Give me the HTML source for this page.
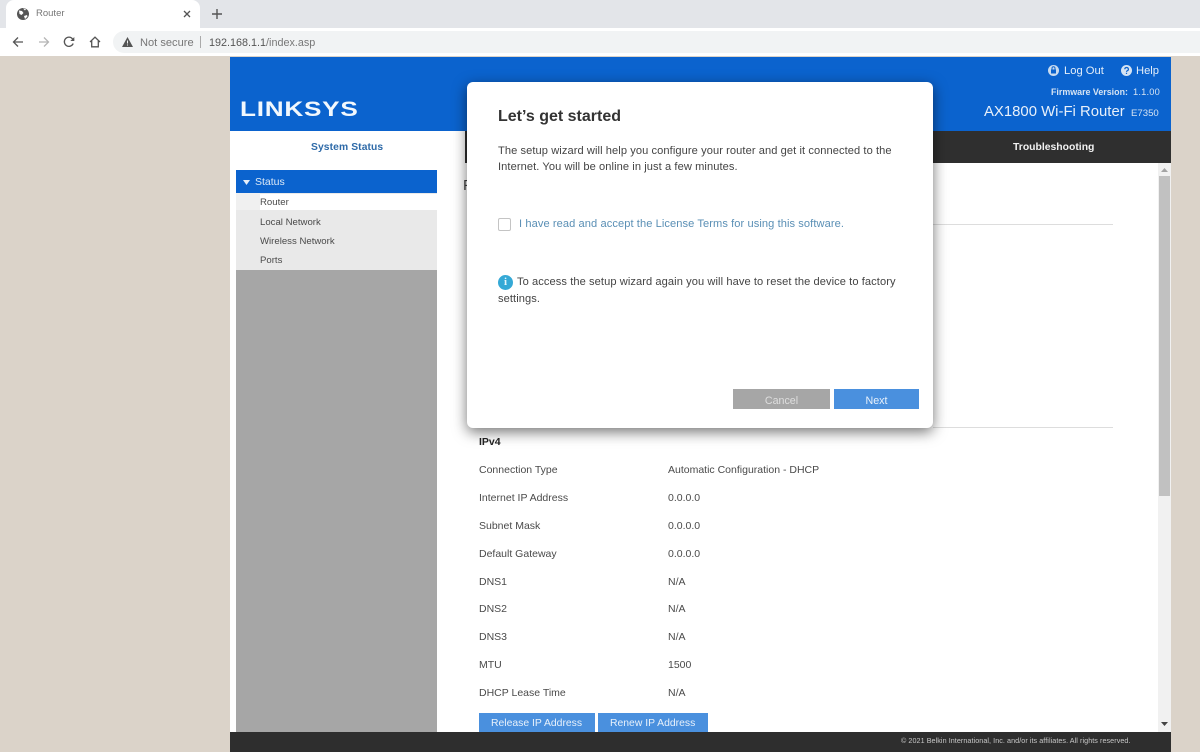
<!DOCTYPE html>
<html><head><meta charset="utf-8"><title>Router</title>
<style>
html,body{margin:0;padding:0;width:1200px;height:752px;overflow:hidden;background:#dbd3c9;font-family:"Liberation Sans",sans-serif}
#w{position:absolute;left:0;top:0;width:1200px;height:752px;overflow:hidden;filter:blur(.3px)}
.a{position:absolute}
.t{position:absolute;white-space:nowrap;line-height:14px}
.l{font-size:10.5px;color:#4a4a4a}
.c{font-size:10.5px;color:#4a4a4a}
.s{font-size:9.6px;color:#4a4a4a}
.m{font-size:11.1px;color:#444;letter-spacing:.08px}
svg{position:absolute;overflow:visible}
</style></head><body><div id="w">
<!-- chrome -->
<div class="a" style="left:0;top:0;width:1200px;height:28px;background:#e3e5e9"></div>
<div class="a" style="left:6px;top:0;width:194px;height:28px;background:#fff;border-radius:8px 8px 0 0"></div>
<div class="a" style="left:0;top:28px;width:1200px;height:29px;background:#fff"></div>
<svg style="left:16px;top:7px" width="14" height="14" viewBox="0 0 14 14"><circle cx="7" cy="7" r="6" fill="#555"/><path d="M3 3.5l3 .5 1.5 2-2 2-2-1zM8 9l3-1 .5 1.5-2.500 2.500zM7 1.500l3 .5-1 1.500z" fill="#fff"/></svg>
<div class="t" style="left:36px;top:7px;font-size:9.500px;line-height:14px;color:#777">Router</div>
<svg style="left:182px;top:9px" width="10" height="10" viewBox="0 0 10 10"><path d="M2 2l6 6M8 2l-6 6" stroke="#555" stroke-width="1.300" fill="none"/></svg>
<svg style="left:211px;top:8px" width="12" height="12" viewBox="0 0 12 12"><path d="M6 1v10M1 6h10" stroke="#555" stroke-width="1.400" fill="none"/></svg>
<svg style="left:12px;top:36px" width="12" height="12" viewBox="0 0 12 12"><path d="M11 6H1.500M6 1.500L1.500 6 6 10.500" stroke="#555" stroke-width="1.300" fill="none"/></svg>
<svg style="left:38px;top:36px" width="12" height="12" viewBox="0 0 12 12"><path d="M1 6h9.500M6 1.500L10.500 6 6 10.500" stroke="#b5b5b5" stroke-width="1.300" fill="none"/></svg>
<svg style="left:63px;top:36px" width="12" height="12" viewBox="0 0 12 12"><path d="M10.200 7.500A4.600 4.600 0 1 1 9.500 2.800L11 4.300" stroke="#555" stroke-width="1.300" fill="none"/><path d="M11.300 1v4h-4z" fill="#555"/></svg>
<svg style="left:89px;top:36px" width="12" height="12" viewBox="0 0 12 12"><path d="M1 6l5-4.800L11 6M2.700 5v5.800h6.600V5" stroke="#555" stroke-width="1.300" fill="none"/></svg>
<div class="a" style="left:113px;top:31px;width:1087px;height:22px;background:#f1f3f4;border-radius:11px 0 0 11px"></div>
<svg style="left:122px;top:37px" width="11" height="10" viewBox="0 0 11 10"><path d="M5.500 0L11 10H0z" fill="#555"/><path d="M5.500 3.500v3M5.500 7.500v1" stroke="#f1f3f4" stroke-width="1"/></svg>
<div class="t" style="left:140px;top:36px;font-size:11.100px;color:#777">Not secure</div>
<div class="a" style="left:200px;top:36px;width:1px;height:12px;background:#aaa"></div>
<div class="t" style="left:209px;top:36px;font-size:10.800px;color:#777"><span style="color:#555">192.168.1.1</span>/index.asp</div>

<!-- page -->
<div class="a" style="left:0;top:56px;width:1200px;height:696px;background:#dbd3c9"></div>
<div class="a" style="left:230px;top:57px;width:941px;height:695px;background:#fff"></div>
<div class="a" style="left:230px;top:57px;width:941px;height:74px;background:#0b63ce"></div>
<div class="t" style="left:240px;top:94px;font-size:21px;line-height:32px;font-weight:bold;color:#f2f8fd;letter-spacing:.6px;transform:scaleX(1.245);transform-origin:0 0">LINKSYS</div>
<svg style="left:1048px;top:65px" width="11" height="11" viewBox="0 0 11 11"><circle cx="5.500" cy="5.500" r="5.500" fill="#c9dbef"/><rect x="3" y="4.500" width="5" height="4" fill="#0b63ce"/><path d="M4 4.500V3.200a1.500 1.500 0 0 1 3 0v1.300" stroke="#0b63ce" fill="none"/></svg>
<div class="t" style="left:1064px;top:64px;font-size:11.200px;color:#e4eef9">Log Out</div>
<svg style="left:1121px;top:65px" width="11" height="11" viewBox="0 0 11 11"><circle cx="5.500" cy="5.500" r="5.500" fill="#d5e3f3"/><path d="M3.800 4.200a1.800 1.700 0 1 1 2.600 1.500c-.6.300-.9.600-.9 1.200M5.500 7.800v1.200" stroke="#0b63ce" stroke-width="1.200" fill="none"/></svg>
<div class="t" style="left:1136px;top:64px;font-size:11.200px;color:#e4eef9">Help</div>
<div class="t" style="left:1051px;top:85px;font-size:8.900px;font-weight:bold;color:#d5e3f3">Firmware Version:</div>
<div class="t" style="left:1133px;top:85px;font-size:9.300px;color:#d5e3f3;letter-spacing:.2px">1.1.00</div>
<div class="t" style="left:984px;top:105px;font-size:14.900px;color:#e8f0fa">AX1800 Wi-Fi Router</div>
<div class="t" style="left:1131px;top:107px;font-size:9.600px;color:#d5e3f3">E7350</div>

<div class="a" style="left:465px;top:131px;width:706px;height:32px;background:#2f2f2f"></div>
<div class="t" style="left:1013px;top:141px;font-size:10.400px;font-weight:bold;color:#f2f2f2">Troubleshooting</div>
<div class="t" style="left:311px;top:141px;font-size:10.300px;font-weight:bold;color:#2e6aa8;letter-spacing:.1px">System Status</div>

<div class="a" style="left:236px;top:170px;width:201px;height:23px;background:#0b63ce"></div>
<svg style="left:243px;top:180px" width="7" height="5" viewBox="0 0 7 5"><path d="M0 0h7L3.500 5z" fill="#e6eff9"/></svg>
<div class="t" style="left:255px;top:175px;font-size:10.500px;color:#dce9f7">Status</div>
<div class="a" style="left:236px;top:193px;width:201px;height:77px;background:#e9e9e9"></div>
<div class="a" style="left:260px;top:194px;width:177px;height:16px;background:#fff"></div>
<div class="a" style="left:236px;top:193px;width:24px;height:17px;background:#f0f0f0"></div>
<div class="t s" style="left:260px;top:196px">Router</div>
<div class="t s" style="left:260px;top:216px">Local Network</div>
<div class="t s" style="left:260px;top:235px">Wireless Network</div>
<div class="t s" style="left:260px;top:254px">Ports</div>
<div class="a" style="left:236px;top:270px;width:201px;height:462px;background:#a6a6a6"></div>

<div class="t" style="left:463px;top:179px;font-size:15px;color:#444">F</div>
<div class="a" style="left:933px;top:224px;width:180px;height:1px;background:#ddd"></div>
<div class="a" style="left:933px;top:427px;width:180px;height:1px;background:#ddd"></div>

<div class="t" style="left:479px;top:435px;font-size:10.500px;font-weight:bold;color:#222">IPv4</div>
<div class="t l" style="left:479px;top:463px">Connection Type</div><div class="t c" style="left:668px;top:463px">Automatic Configuration - DHCP</div>
<div class="t l" style="left:479px;top:491px">Internet IP Address</div><div class="t c" style="left:668px;top:491px">0.0.0.0</div>
<div class="t l" style="left:479px;top:519px">Subnet Mask</div><div class="t c" style="left:668px;top:519px">0.0.0.0</div>
<div class="t l" style="left:479px;top:547px">Default Gateway</div><div class="t c" style="left:668px;top:547px">0.0.0.0</div>
<div class="t l" style="left:479px;top:575px">DNS1</div><div class="t c" style="left:668px;top:575px">N/A</div>
<div class="t l" style="left:479px;top:602px">DNS2</div><div class="t c" style="left:668px;top:602px">N/A</div>
<div class="t l" style="left:479px;top:630px">DNS3</div><div class="t c" style="left:668px;top:630px">N/A</div>
<div class="t l" style="left:479px;top:658px">MTU</div><div class="t c" style="left:668px;top:658px">1500</div>
<div class="t l" style="left:479px;top:686px">DHCP Lease Time</div><div class="t c" style="left:668px;top:686px">N/A</div>
<div class="a" style="left:479px;top:713px;width:116px;height:19px;background:#4a90de"></div>
<div class="t" style="left:491px;top:716.500px;font-size:10.400px;color:#e8f1fb">Release IP Address</div>
<div class="a" style="left:598px;top:713px;width:110px;height:19px;background:#4a90de"></div>
<div class="t" style="left:610px;top:716.500px;font-size:10.400px;color:#e8f1fb">Renew IP Address</div>

<!-- scrollbar -->
<div class="a" style="left:1158px;top:163px;width:13px;height:569px;background:#f1f1f1"></div>
<div class="a" style="left:1159px;top:176px;width:11px;height:320px;background:#c1c1c1"></div>
<svg style="left:1161px;top:168px" width="7" height="4" viewBox="0 0 7 4"><path d="M0 4h7L3.500 0z" fill="#a3a3a3"/></svg>
<svg style="left:1161px;top:722px" width="7" height="4" viewBox="0 0 7 4"><path d="M0 0h7L3.500 4z" fill="#444"/></svg>

<div class="a" style="left:230px;top:732px;width:941px;height:20px;background:#2e2e2e"></div>
<div class="t" style="left:901px;top:734px;font-size:7.200px;color:#c8c8c8;letter-spacing:.06px">© 2021 Belkin International, Inc. and/or its affiliates. All rights reserved.</div>

<!-- modal -->
<div class="a" style="left:467px;top:82px;width:466px;height:346px;background:#fff;border-radius:6px;box-shadow:0 4px 14px rgba(0,0,0,.55)"></div>
<div class="t" style="left:498px;top:108px;font-size:16px;line-height:18px;font-weight:bold;color:#333">Let’s get started</div>
<div class="t m" style="left:498px;top:144px">The setup wizard will help you configure your router and get it connected to the</div>
<div class="t m" style="left:498px;top:160px">Internet. You will be online in just a few minutes.</div>
<div class="a" style="left:498px;top:218px;width:11px;height:11px;border:1px solid #c4c4c4;border-radius:2px;background:#fff"></div>
<div class="t" style="left:519px;top:217px;font-size:11.100px;color:#5a8fb5;letter-spacing:.08px">I have read and accept the License Terms for using this software.</div>
<div class="a" style="left:498px;top:275px;width:15px;height:15px;border-radius:50%;background:#35a9d6"></div>
<div class="t" style="left:498px;top:275px;width:15px;text-align:center;font-size:11px;line-height:15px;font-weight:bold;color:#e8f6fb;font-family:'Liberation Serif',serif">i</div>
<div class="t m" style="left:517px;top:275px">To access the setup wizard again you will have to reset the device to factory</div>
<div class="t m" style="left:498px;top:292px">settings.</div>
<div class="a" style="left:733px;top:389px;width:97px;height:20px;background:#a6a6a6"></div>
<div class="t" style="left:733px;top:394px;width:97px;text-align:center;font-size:10.700px;color:#dedede">Cancel</div>
<div class="a" style="left:834px;top:389px;width:85px;height:20px;background:#4a90de"></div>
<div class="t" style="left:834px;top:394px;width:85px;text-align:center;font-size:10.700px;color:#e8f1fb">Next</div>
</div></body></html>
